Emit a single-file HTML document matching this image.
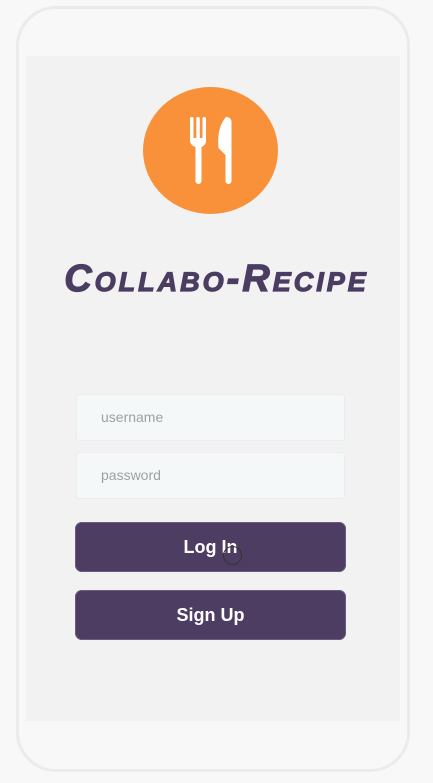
<!DOCTYPE html>
<html><head><style>
html,body{margin:0;padding:0;width:433px;height:783px;background:#f8f8f8;overflow:hidden;font-family:"Liberation Sans",sans-serif;}
.frame{position:absolute;left:16px;top:6px;width:388px;height:760px;border:3px solid #ebebeb;border-radius:40px;background:#f8f8f8;}
.screen{position:absolute;left:26px;top:56px;width:374px;height:665px;background:#f2f2f2;}
.logo{position:absolute;left:143px;top:87px;width:135px;height:127px;border-radius:50%;background:#f9913b;}
.title{position:absolute;left:0;width:433px;top:258px;text-align:center;font-size:38px;font-weight:bold;font-style:italic;color:#4b3c62;font-variant:small-caps;letter-spacing:3px;-webkit-text-stroke:1.2px #4b3c62;font-family:"Liberation Sans",sans-serif;}
.inp{position:absolute;left:76px;width:269px;height:47px;background:#f5f8f9;border:1px solid #ececec;border-radius:3px;box-sizing:border-box;color:#a0a0a0;font-size:14px;line-height:45px;padding-left:24px;}
.btn{position:absolute;left:75px;width:271px;height:50px;background:#4e3d62;border-radius:7px;color:#fff;font-weight:bold;font-size:18px;text-align:center;line-height:50px;box-shadow:0 0 0 1px #6a5a80 inset;}
</style></head><body>
<div class="frame"></div>
<div class="screen"></div>
<div class="logo"></div>
<svg style="position:absolute;left:0;top:0" width="433" height="300">
<g fill="#fff">
<rect x="190" y="117" width="3.5" height="26" rx="1.7"/>
<rect x="196.3" y="117" width="3.5" height="26" rx="1.7"/>
<rect x="202.5" y="117" width="3.5" height="26" rx="1.7"/>
<path d="M190 138 h16 v3 a7 7 0 0 1 -4.5 6 v34 a3 3 0 0 1 -6 0 v-34 a7 7 0 0 1 -5.5 -6z"/>
<path d="M226 117 a5 5 0 0 1 5.5 4 v60 a3 3 0 0 1 -6 0 v-26 l-7 -7 q-2 -20 7.5 -31z"/>
</g>
</svg>
<div class="title">Collabo-Recipe</div>
<div class="inp" style="top:394px">username</div>
<div class="inp" style="top:452px">password</div>
<div class="btn" style="top:522px">Log In</div>
<div style="position:absolute;left:223px;top:546px;width:19px;height:19px;border:1.5px solid #333;border-radius:50%;box-sizing:border-box;"></div>
<div class="btn" style="top:590px">Sign Up</div>
</body></html>
